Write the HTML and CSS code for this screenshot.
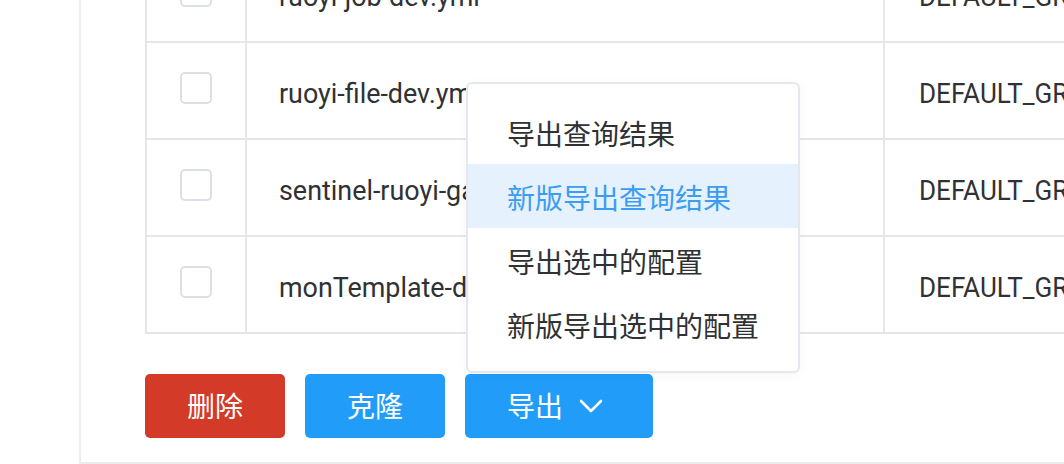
FILE: index.html
```html
<!DOCTYPE html>
<html lang="zh-CN">
<head>
<meta charset="utf-8">
<title>配置列表</title>
<link rel="stylesheet" href="styles.css">
</head>
<body>
<div class="viewport">
  <div class="panel">
    <table class="grid">
      <tbody>
        <tr>
          <td class="c-check"><span class="checkbox"></span></td>
          <td class="c-name"><span class="cond">ruoyi-job-dev.yml</span></td>
          <td class="c-group"><span class="cond narrow">DEFAULT_GROUP</span></td>
        </tr>
        <tr>
          <td class="c-check"><span class="checkbox"></span></td>
          <td class="c-name"><span class="cond">ruoyi-file-dev.yml</span></td>
          <td class="c-group"><span class="cond narrow">DEFAULT_GROUP</span></td>
        </tr>
        <tr>
          <td class="c-check"><span class="checkbox"></span></td>
          <td class="c-name"><span class="cond">sentinel-ruoyi-gateway</span></td>
          <td class="c-group"><span class="cond narrow">DEFAULT_GROUP</span></td>
        </tr>
        <tr>
          <td class="c-check"><span class="checkbox"></span></td>
          <td class="c-name"><span class="cond">monTemplate-dev.yml</span></td>
          <td class="c-group"><span class="cond narrow">DEFAULT_GROUP</span></td>
        </tr>
      </tbody>
    </table>
    <div class="toolbar">
      <button class="btn btn-danger" type="button">删除</button>
      <button class="btn btn-primary" type="button">克隆</button>
      <div class="dropdown">
        <button class="btn btn-primary btn-drop" type="button">导出<svg class="chev" viewBox="0 0 28 28" width="28" height="28"><path d="M4 9 L14 19 L24 9" fill="none" stroke="#fff" stroke-width="2.6" stroke-linecap="round" stroke-linejoin="round"/></svg></button>
        <ul class="menu">
          <li class="menu-item">导出查询结果</li>
          <li class="menu-item active">新版导出查询结果</li>
          <li class="menu-item">导出选中的配置</li>
          <li class="menu-item">新版导出选中的配置</li>
        </ul>
      </div>
    </div>
  </div>
</div>
</body>
</html>
```
FILE: styles.css
```css
html, body {
  margin: 0;
  padding: 0;
  background: #fff;
}
body {
  font-family: Roboto, "Noto Sans CJK SC", sans-serif;
  color: #303133;
  overflow: hidden;
}
.viewport {
  width: 1064px;
  height: 464px;
  overflow: hidden;
}
.panel {
  margin-left: 79px;
  margin-top: -54px;
  border-left: 2px solid #ececec;
  border-bottom: 2px solid #ececec;
  padding: 0 0 24px 64px;
  width: 1200px;
}
.grid {
  border-collapse: separate;
  border-spacing: 0;
  table-layout: fixed;
  width: 1300px;
  border-left: 2px solid #e6e6e6;
}
.grid td {
  height: 95px;
  padding: 0;
  border-right: 2px solid #e6e6e6;
  border-bottom: 2px solid #e6e6e6;
  vertical-align: middle;
  font-size: 28px;
  white-space: nowrap;
  overflow: hidden;
}
.c-check {
  width: 98px;
  text-align: center;
}
.grid td.c-name {
  width: 604px;
  padding-left: 32px;
}
.grid td.c-group {
  padding-left: 34px;
}
.checkbox {
  display: inline-block;
  width: 32px;
  height: 32px;
  box-sizing: border-box;
  border: 2px solid #dcdfe6;
  border-radius: 5px;
  background: #fff;
  vertical-align: middle;
  margin-top: -10px;
}
.cond {
  display: inline-block;
  margin-top: 6px;
  transform: scaleX(0.96);
  transform-origin: left center;
}
.cond.narrow {
  transform: scaleX(0.93);
}
.toolbar {
  margin-top: 40px;
  display: flex;
  gap: 20px;
  align-items: flex-start;
}
.btn {
  height: 64px;
  border: none;
  border-radius: 5px;
  padding: 4px 42px 0;
  font-family: Roboto, "Noto Sans CJK SC", sans-serif;
  font-size: 28px;
  color: #fff;
  line-height: 56px;
  cursor: pointer;
  display: inline-flex;
  align-items: center;
  box-sizing: border-box;
}
.btn-danger {
  background: #d33a27;
  width: 140px;
  justify-content: center;
}
.btn-primary {
  background: #219df9;
}
.btn-primary:not(.btn-drop) {
  width: 140px;
  justify-content: center;
}
.btn-drop {
  width: 188px;
  padding-right: 48px;
}
.chev {
  margin-left: 14px;
  margin-top: -4px;
  display: block;
}
.dropdown {
  position: relative;
}
.menu {
  position: absolute;
  left: 1px;
  bottom: calc(100% + 1px);
  margin: 0;
  padding: 16px 0 15px;
  list-style: none;
  background: #fff;
  border: 2px solid #e4e7ed;
  border-radius: 6px;
  box-shadow: 0 2px 12px rgba(0, 0, 0, 0.04);
  white-space: nowrap;
}
.menu-item {
  height: 64px;
  line-height: 72px;
  padding: 0 39px;
  font-size: 28px;
  color: #303133;
  overflow: hidden;
}
.menu-item.active {
  background: #e5f2fd;
  color: #3c9cf2;
}
```
